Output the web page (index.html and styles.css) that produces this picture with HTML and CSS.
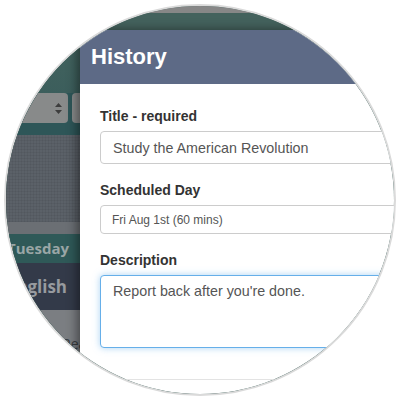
FILE: index.html
```html
<!DOCTYPE html>
<html lang="en">
<head>
    <meta charset="UTF-8">
    <title>History</title>
    <link rel="stylesheet" href="styles.css">
</head>
<body>
    <div class="lens">
        <div class="topbar"></div>
        <div class="stage">
            <!-- planner behind the modal -->
            <div class="sidebar">
                <div class="sb-head"></div>
                <div class="sb-filter">
                    <div class="sb-select">
                        <svg class="sb-arrows" width="7" height="11" viewBox="0 0 7 11">
                            <path d="M3.5 0 L7 4 L0 4 Z M3.5 11 L7 7 L0 7 Z" fill="#3d3d3d"/>
                        </svg>
                    </div>
                    <div class="sb-select"></div>
                </div>
                <div class="sb-dark"></div>
                <div class="sb-sep"></div>
                <div class="sb-day">Tuesday</div>
                <div class="sb-subject">English</div>
                <div class="sb-rest"><span class="sb-item">Reading</span></div>
            </div>

            <!-- MODAL -->
            <div class="modal-wrap">
                <div class="modal">
                    <div class="modal-header">History</div>
                    <div class="modal-body">
                        <label class="field-label">Title - required</label>
                        <input class="form-control title-input" type="text" value="Study the American Revolution">

                        <label class="field-label">Scheduled Day</label>
                        <select class="form-control day-select">
                            <option>Fri Aug 1st (60 mins)</option>
                        </select>

                        <label class="field-label">Description</label>
                        <textarea class="form-control desc-input">Report back after you're done.</textarea>
                    </div>
                    <div class="modal-footer"></div>
                </div>
            </div>
        </div>
    </div>
</body>
</html>
```

FILE: styles.css
```css
* {
    box-sizing: border-box;
}

body {
    margin: 0;
    background: #fff;
    font-family: "Liberation Sans", Arial, sans-serif;
}

.lens {
    width: 392px;
    height: 392px;
    margin: 4px;
    border: 2px solid #dadada;
    border-radius: 50%;
    overflow: hidden;
    display: flex;
    flex-direction: column;
    background: #44625d;
}

.topbar {
    height: 7px;
    background: #878787;
    flex-shrink: 0;
}

.stage {
    flex: 1;
    display: flex;
    background: #44625d;
}

/* Sidebar (background app) */
.sidebar {
    width: 74px;
    flex-shrink: 0;
    display: flex;
    flex-direction: column;
    overflow: hidden;
    font-family: "Open Sans", sans-serif;
    font-weight: 700;
}

.sb-head {
    height: 80px;
    background: linear-gradient(#46655f, #3c5e5c);
}

.sb-filter {
    height: 42px;
    padding-bottom: 12px;
    display: flex;
    gap: 4px;
    overflow: hidden;
    background: #2e5658;
}

.sb-select {
    width: 62px;
    flex-shrink: 0;
    height: 30px;
    background: #888a8a;
    border-radius: 4px;
    position: relative;
}

.sb-arrows {
    position: absolute;
    right: 6px;
    top: 10px;
}

.sb-dark {
    height: 87px;
    background-color: #5b6168;
    background-image:
        repeating-linear-gradient(0deg, rgba(0,0,0,0.05) 0 1px, transparent 1px 3px),
        repeating-linear-gradient(90deg, rgba(0,0,0,0.05) 0 1px, transparent 1px 3px);
}

.sb-sep {
    height: 12px;
    background: #6b6f74;
}

.sb-day {
    height: 29px;
    background: #2f5958;
    color: #9aa6a6;
    font-size: 15px;
    line-height: 29px;
    text-align: right;
    padding-right: 11px;
}

.sb-subject {
    height: 47px;
    background: #333a49;
    color: #979a9f;
    font-size: 17px;
    line-height: 47px;
    text-align: right;
    padding-right: 13px;
}

.sb-rest {
    flex: 1;
    background: #7b7e82;
    padding: 22px 0 0 56px;
}

.sb-item {
    color: #3a3d41;
    font-size: 14px;
    font-weight: 400;
}

/* Modal */
.modal-wrap {
    flex: 1;
    padding-top: 17px;
    position: relative;
    z-index: 1;
}

.modal {
    width: 360px;
    height: 100%;
    background: #fff;
    display: flex;
    flex-direction: column;
    box-shadow: -3px 0 10px rgba(0,0,0,0.45);
}

.modal-header {
    height: 54px;
    flex-shrink: 0;
    background: #5d6a86;
    color: #fff;
    font-size: 22px;
    font-weight: 700;
    line-height: 54px;
    padding-left: 11px;
}

.modal-body {
    padding: 22px 20px 31px;
    display: flex;
    flex-direction: column;
}

.field-label {
    font-size: 14px;
    font-weight: 700;
    line-height: 20px;
    color: #333;
    margin-bottom: 5px;
}

.form-control {
    width: 320px;
    border: 1px solid #ccc;
    border-radius: 4px;
    background: #fff;
    color: #555;
    font-family: "Liberation Sans", Arial, sans-serif;
    font-size: 14.3px;
    margin: 0 0 16px;
    outline: none;
}

.title-input {
    height: 33px;
    padding: 0 12px;
}

.day-select {
    appearance: none;
    height: 29px;
    padding: 0 11px;
    font-size: 12px;
}

.desc-input {
    height: 73px;
    padding: 5px 12px;
    line-height: 20px;
    resize: none;
    margin-bottom: 0;
    border-color: #66afe9;
    box-shadow: 0 0 7px rgba(102,175,233,0.55);
}

.modal-footer {
    flex: 1;
    border-top: 1px solid #e3e3e3;
}
```
